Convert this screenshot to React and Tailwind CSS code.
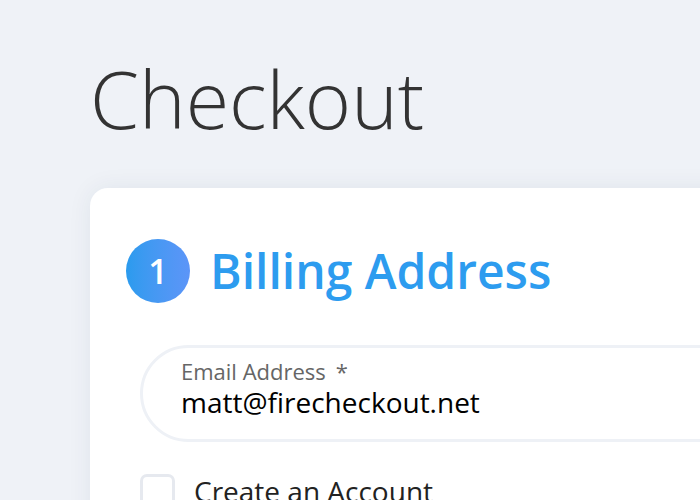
export default function App() {
  return (
    <div
      className="min-h-screen w-[700px] h-[500px] overflow-hidden bg-[#eff2f7]"
      style={{ fontFamily: '"Open Sans", "Noto Sans", sans-serif' }}
    >
      <div className="pl-[90px]">
        <h1 className="pt-[59px] text-[79px] font-light leading-none text-[#333333]">
          Checkout
        </h1>

        <div className="mt-[50px] w-[700px] h-[400px] rounded-[18px] bg-white shadow-[0_0_24px_rgba(30,50,90,0.07)] pl-[36px] pt-[51px]">
          {/* step heading */}
          <div className="flex items-center gap-[20px]">
            <div className="flex h-[64px] w-[64px] items-center justify-center rounded-full bg-gradient-to-r from-[#2a9bee] to-[#5c95f8] text-[34px] font-semibold leading-none text-white">
              1
            </div>
            <h2 className="text-[48px] font-semibold leading-none text-[#2d9cef]">
              Billing Address
            </h2>
          </div>

          <div className="pl-[14px]">
            {/* email field */}
            <div className="mt-[42px] h-[97px] rounded-full border-[3px] border-[#eef1f6] pl-[38px] pt-[10px]">
              <div className="text-[22px] leading-[26px] text-[#666666]">
                Email Address<span className="ml-[10px]">*</span>
              </div>
              <div className="mt-[2px] text-[28px] leading-[32px] text-black">
                matt@firecheckout.net
              </div>
            </div>

            {/* create account */}
            <div className="mt-[32px] flex items-center gap-[19px]">
              <div className="h-[35px] w-[35px] shrink-0 rounded-[7px] border-[3px] border-[#e6e9ef]" />
              <span className="text-[28px] leading-[35px] text-[#222222]">
                Create an Account
              </span>
            </div>
          </div>
        </div>
      </div>
    </div>
  )
}
